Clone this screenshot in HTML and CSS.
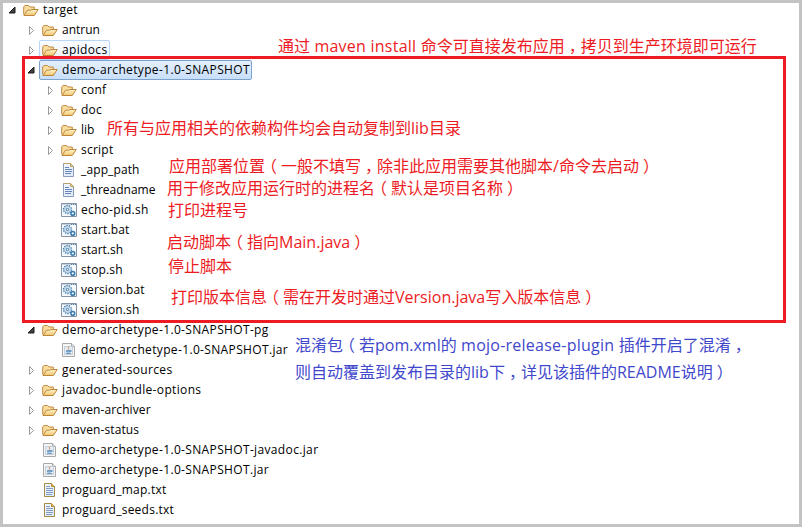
FILE: index.html
```
<!DOCTYPE html>
<html lang="zh-CN">
<head>
<meta charset="utf-8">
<title>target</title>
<link rel="stylesheet" href="styles.css">
</head>
<body>
<svg class="defs" aria-hidden="true">
  <defs>
    <linearGradient id="gold" x1="0" y1="0" x2="0" y2="1"><stop offset="0" stop-color="#fff6d0"/><stop offset="1" stop-color="#f0c469"/></linearGradient>
    <linearGradient id="page" x1="0" y1="0" x2="1" y2="1"><stop offset="0" stop-color="#f4f8ff"/><stop offset="1" stop-color="#dce8f8"/></linearGradient>
  </defs>
  <symbol id="open" viewBox="0 0 10 16"><path d="M8 5v6H2z" fill="#404040" stroke="#1c1c1c" stroke-linejoin="round"/></symbol>
  <symbol id="closed" viewBox="0 0 10 16"><path d="M3.5 4.5v8l4-4z" fill="#fff" stroke="#9b9b9b"/></symbol>
  <symbol id="folder" viewBox="0 0 16 16">
    <path d="M.7 12.5V5l1.2-1.5h3.7L7 5h4.3v3" fill="#f8dda0" stroke="#c28a43"/>
    <path d="M1 13.5 4.5 8.2h3L9 7.5h6.2L11.3 13.5z" fill="url(#gold)" stroke="#bd853b" stroke-linejoin="round"/>
  </symbol>
  <symbol id="file" viewBox="0 0 16 16">
    <path d="M2.5 1.5h7l3 3v10h-10z" fill="url(#page)" stroke="#8b9bb8"/>
    <path d="M2.5 1.5h7l3 3h-3v-3" fill="#ecd590" stroke="#bba365"/>
    <path d="M4 5.5h4M4 7.5h7M4 9.5h7M4 11.5h6" stroke="#6686bb"/>
  </symbol>
  <symbol id="text" viewBox="0 0 16 16">
    <path d="M2.5 1.5h7l3 3v10h-10z" fill="url(#page)" stroke="#a38a45"/>
    <path d="M9.5 1.5v3h3" fill="#e8bd59" stroke="#b68d36"/>
    <path d="M4 4.5h4M4 6.5h7M4 8.5h7M4 10.5h7M4 12.5h6" stroke="#819bc5"/>
  </symbol>
  <symbol id="jar" viewBox="0 0 16 16">
    <path d="M1.5 1.5h9l3 3v10h-12z" fill="#f5f5f5" stroke="#a8a8a8"/>
    <path d="M10.5 1.5v3h3" fill="#ddd" stroke="#aaa"/>
    <path d="M3.5 4.5h8v8h-8z" fill="#e4edf5" stroke="#c5d0db"/>
    <path d="M5.5 8.5h3.5v1.5H5.5zM9 8.5h1.2v1H9M5 11.5h5" fill="#8db3d6" stroke="#6895be" stroke-width=".9"/>
    <path d="M7.9 4.6c-1.7 1 .8 1.7-.6 3" fill="none" stroke="#d4854d"/>
  </symbol>
  <symbol id="script" viewBox="0 0 16 16">
    <path d="M.5 1.5h15v13H.5z" fill="#f5f9fc" stroke="#8493a5"/>
    <path d="M1 2.5h14" stroke="#c8d3df"/>
    <path d="M10 2.5h5" stroke="#637d9e" stroke-dasharray="1 1"/>
    <circle cx="6.5" cy="7.5" r="3.9" fill="none" stroke="#497eac" stroke-width="1.5" stroke-dasharray="1.4 1"/>
    <circle cx="6.5" cy="7.5" r="3" fill="#e3f0f8" stroke="#8bb5d3" stroke-width=".8"/>
    <circle cx="6.5" cy="7.5" r="1.2" fill="#fff" stroke="#346e9e"/>
    <circle cx="11.8" cy="11.4" r="1.9" fill="#d9edf8" stroke="#397bad" stroke-width="1.5"/>
    <circle cx="11.8" cy="11.4" r=".7" fill="#fff"/>
  </symbol>
</svg>

<main class="frame">
  <ul class="tree">
    <li class="row"><svg class="arrow"><use href="#open"/></svg><span class="item"><svg class="icon"><use href="#folder"/></svg><span class="label s2">target</span></span></li>
    <li class="row d1"><svg class="arrow"><use href="#closed"/></svg><span class="item"><svg class="icon"><use href="#folder"/></svg><span class="label">antrun</span></span></li>
    <li class="row d1"><svg class="arrow"><use href="#closed"/></svg><span class="item hover"><svg class="icon"><use href="#folder"/></svg><span class="label s3">apidocs</span></span></li>
    <li class="row d1"><svg class="arrow"><use href="#open"/></svg><span class="item selected"><svg class="icon"><use href="#folder"/></svg><span class="label s3">demo-archetype-1.0-SNAPSHOT</span></span></li>
    <li class="row d2"><svg class="arrow"><use href="#closed"/></svg><span class="item"><svg class="icon"><use href="#folder"/></svg><span class="label s2">conf</span></span></li>
    <li class="row d2"><svg class="arrow"><use href="#closed"/></svg><span class="item"><svg class="icon"><use href="#folder"/></svg><span class="label s2">doc</span></span></li>
    <li class="row d2"><svg class="arrow"><use href="#closed"/></svg><span class="item"><svg class="icon"><use href="#folder"/></svg><span class="label">lib</span></span></li>
    <li class="row d2"><svg class="arrow"><use href="#closed"/></svg><span class="item"><svg class="icon"><use href="#folder"/></svg><span class="label s2">script</span></span></li>
    <li class="row d2"><span class="arrow"></span><span class="item"><svg class="icon"><use href="#file"/></svg><span class="label s1">_app_path</span></span></li>
    <li class="row d2"><span class="arrow"></span><span class="item"><svg class="icon"><use href="#file"/></svg><span class="label">_threadname</span></span></li>
    <li class="row d2"><span class="arrow"></span><span class="item"><svg class="icon"><use href="#script"/></svg><span class="label s2">echo-pid.sh</span></span></li>
    <li class="row d2"><span class="arrow"></span><span class="item"><svg class="icon"><use href="#script"/></svg><span class="label s1">start.bat</span></span></li>
    <li class="row d2"><span class="arrow"></span><span class="item"><svg class="icon"><use href="#script"/></svg><span class="label">start.sh</span></span></li>
    <li class="row d2"><span class="arrow"></span><span class="item"><svg class="icon"><use href="#script"/></svg><span class="label s1">stop.sh</span></span></li>
    <li class="row d2"><span class="arrow"></span><span class="item"><svg class="icon"><use href="#script"/></svg><span class="label s1">version.bat</span></span></li>
    <li class="row d2"><span class="arrow"></span><span class="item"><svg class="icon"><use href="#script"/></svg><span class="label s1">version.sh</span></span></li>
    <li class="row d1"><svg class="arrow"><use href="#open"/></svg><span class="item"><svg class="icon"><use href="#folder"/></svg><span class="label s3">demo-archetype-1.0-SNAPSHOT-pg</span></span></li>
    <li class="row d2"><span class="arrow"></span><span class="item"><svg class="icon"><use href="#jar"/></svg><span class="label s3">demo-archetype-1.0-SNAPSHOT.jar</span></span></li>
    <li class="row d1"><svg class="arrow"><use href="#closed"/></svg><span class="item"><svg class="icon"><use href="#folder"/></svg><span class="label s3">generated-sources</span></span></li>
    <li class="row d1"><svg class="arrow"><use href="#closed"/></svg><span class="item"><svg class="icon"><use href="#folder"/></svg><span class="label s3">javadoc-bundle-options</span></span></li>
    <li class="row d1"><svg class="arrow"><use href="#closed"/></svg><span class="item"><svg class="icon"><use href="#folder"/></svg><span class="label s1">maven-archiver</span></span></li>
    <li class="row d1"><svg class="arrow"><use href="#closed"/></svg><span class="item"><svg class="icon"><use href="#folder"/></svg><span class="label s1">maven-status</span></span></li>
    <li class="row d1"><span class="arrow"></span><span class="item"><svg class="icon"><use href="#jar"/></svg><span class="label s3">demo-archetype-1.0-SNAPSHOT-javadoc.jar</span></span></li>
    <li class="row d1"><span class="arrow"></span><span class="item"><svg class="icon"><use href="#jar"/></svg><span class="label s3">demo-archetype-1.0-SNAPSHOT.jar</span></span></li>
    <li class="row d1"><span class="arrow"></span><span class="item"><svg class="icon"><use href="#text"/></svg><span class="label s2">proguard_map.txt</span></span></li>
    <li class="row d1"><span class="arrow"></span><span class="item"><svg class="icon"><use href="#text"/></svg><span class="label s2">proguard_seeds.txt</span></span></li>
  </ul>
  <div class="highlight"></div>
  <p class="note n-install">通过<span class="latin s2"> maven install </span>命令可直接发布应用<span class="mark">，</span>拷贝到生产环境即可运行</p>
  <p class="note n-lib">所有与应用相关的依赖构件均会自动复制到<span class="latin">lib</span>目录</p>
  <p class="note n-path">应用部署位置<span class="mark">（</span>一般不填写<span class="mark">，</span>除非此应用需要其他脚本<span class="latin">/</span>命令去启动<span class="mark">）</span></p>
  <p class="note n-thread">用于修改应用运行时的进程名<span class="mark">（</span>默认是项目名称<span class="mark">）</span></p>
  <p class="note n-pid">打印进程号</p>
  <p class="note n-start">启动脚本<span class="mark">（</span>指向<span class="latin">Main.java</span><span class="mark">）</span></p>
  <p class="note n-stop">停止脚本</p>
  <p class="note n-version">打印版本信息<span class="mark">（</span>需在开发时通过<span class="latin">Version.java</span>写入版本信息<span class="mark">）</span></p>
  <p class="note blue n-mix">混淆包<span class="mark">（</span>若<span class="latin">pom.xml</span>的<span class="latin s2"> mojo-release-plugin </span>插件开启了混淆<span class="mark">，</span></p>
  <p class="note blue n-cover">则自动覆盖到发布目录的<span class="latin">lib</span>下<span class="mark">，</span>详见该插件的<span class="latin">README</span>说明<span class="mark">）</span></p>
</main>
</body>
</html>
```
FILE: styles.css
```
* { box-sizing: border-box; }
body { margin: 0; background: #fff; }
.defs { position: absolute; width: 0; height: 0; }
.frame {
  position: relative;
  width: 802px;
  height: 527px;
  border: 3px solid #c3c3c3;
  overflow: hidden;
}
.tree {
  margin: -3px 0 0;
  padding: 0;
  list-style: none;
  font: 12px/20px "Open Sans", "Noto Sans", sans-serif;
  color: #000;
}
.row { display: flex; height: 20px; padding-left: 4px; }
.d1 { padding-left: 23px; }
.d2 { padding-left: 42px; }
.arrow { flex: none; width: 10px; height: 16px; margin: 2px 3px 0 0; }
.item {
  display: flex;
  align-items: center;
  height: 20px;
  padding: 0 1px 0 2px;
  border: 1px solid transparent;
  border-radius: 2px;
}
.hover { border-color: #b8d6fb; background: linear-gradient(#fafcff, #ebf4fe); }
.selected { border-color: #7da2ce; background: linear-gradient(#e4effc, #c8dffb); }
.icon { flex: none; width: 16px; height: 16px; margin-right: 4px; }
.label { white-space: pre; line-height: 18px; }
.s1 { letter-spacing: .12px; }
.s2 { letter-spacing: .24px; }
.s3 { letter-spacing: .35px; }

.highlight {
  position: absolute;
  left: 19px;
  top: 53px;
  width: 764px;
  height: 267px;
  border: 3px solid #ed1c24;
}
.note {
  position: absolute;
  margin: 0;
  font: 400 16px/22px "Noto Sans CJK SC", sans-serif;
  color: #ed1c24;
  white-space: pre;
}
.blue { color: #3f48cc; }
.latin { font-family: "Open Sans", "Noto Sans", sans-serif; }
.mark { padding: 0 4px; font-feature-settings: "halt"; }
.n-install { left: 275px; top: 31px; }
.n-lib { left: 104px; top: 113px; }
.n-path { left: 166px; top: 151px; }
.n-thread { left: 164px; top: 173px; }
.n-pid { left: 165px; top: 195px; }
.n-start { left: 164px; top: 227px; }
.n-stop { left: 165px; top: 251px; }
.n-version { left: 168px; top: 282px; }
.n-mix { left: 292px; top: 330px; }
.n-cover { left: 292px; top: 357px; }
```
